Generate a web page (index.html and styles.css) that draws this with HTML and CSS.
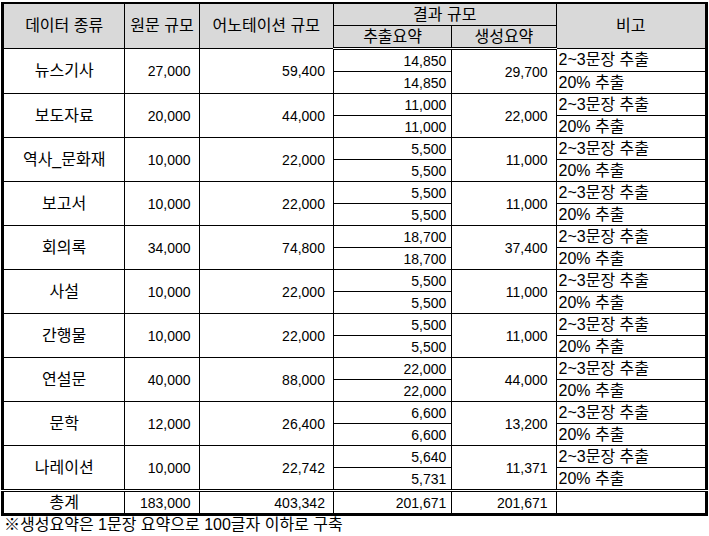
FILE: index.html
```html
<!DOCTYPE html>
<html lang="ko">
<head>
<meta charset="utf-8">
<link rel="stylesheet" href="styles.css">
</head>
<body>
<table class="sheet">
  <colgroup>
    <col class="c1"><col class="c2"><col class="c3"><col class="c4"><col class="c5"><col class="c6">
  </colgroup>
  <thead>
    <tr class="h1">
      <th rowspan="2">데이터 종류</th>
      <th rowspan="2">원문 규모</th>
      <th rowspan="2">어노테이션 규모</th>
      <th colspan="2">결과 규모</th>
      <th rowspan="2">비고</th>
    </tr>
    <tr class="h2">
      <th>추출요약</th>
      <th>생성요약</th>
    </tr>
  </thead>
  <tbody>
    <tr><td rowspan="2" class="name">뉴스기사</td><td rowspan="2" class="num">27,000</td><td rowspan="2" class="num">59,400</td><td class="sub">14,850</td><td rowspan="2" class="num">29,700</td><td class="note">2~3문장 추출</td></tr>
    <tr><td class="sub">14,850</td><td class="note">20% 추출</td></tr>
    <tr><td rowspan="2" class="name">보도자료</td><td rowspan="2" class="num">20,000</td><td rowspan="2" class="num">44,000</td><td class="sub">11,000</td><td rowspan="2" class="num">22,000</td><td class="note">2~3문장 추출</td></tr>
    <tr><td class="sub">11,000</td><td class="note">20% 추출</td></tr>
    <tr><td rowspan="2" class="name">역사_문화재</td><td rowspan="2" class="num">10,000</td><td rowspan="2" class="num">22,000</td><td class="sub">5,500</td><td rowspan="2" class="num">11,000</td><td class="note">2~3문장 추출</td></tr>
    <tr><td class="sub">5,500</td><td class="note">20% 추출</td></tr>
    <tr><td rowspan="2" class="name">보고서</td><td rowspan="2" class="num">10,000</td><td rowspan="2" class="num">22,000</td><td class="sub">5,500</td><td rowspan="2" class="num">11,000</td><td class="note">2~3문장 추출</td></tr>
    <tr><td class="sub">5,500</td><td class="note">20% 추출</td></tr>
    <tr><td rowspan="2" class="name">회의록</td><td rowspan="2" class="num">34,000</td><td rowspan="2" class="num">74,800</td><td class="sub">18,700</td><td rowspan="2" class="num">37,400</td><td class="note">2~3문장 추출</td></tr>
    <tr><td class="sub">18,700</td><td class="note">20% 추출</td></tr>
    <tr><td rowspan="2" class="name">사설</td><td rowspan="2" class="num">10,000</td><td rowspan="2" class="num">22,000</td><td class="sub">5,500</td><td rowspan="2" class="num">11,000</td><td class="note">2~3문장 추출</td></tr>
    <tr><td class="sub">5,500</td><td class="note">20% 추출</td></tr>
    <tr><td rowspan="2" class="name">간행물</td><td rowspan="2" class="num">10,000</td><td rowspan="2" class="num">22,000</td><td class="sub">5,500</td><td rowspan="2" class="num">11,000</td><td class="note">2~3문장 추출</td></tr>
    <tr><td class="sub">5,500</td><td class="note">20% 추출</td></tr>
    <tr><td rowspan="2" class="name">연설문</td><td rowspan="2" class="num">40,000</td><td rowspan="2" class="num">88,000</td><td class="sub">22,000</td><td rowspan="2" class="num">44,000</td><td class="note">2~3문장 추출</td></tr>
    <tr><td class="sub">22,000</td><td class="note">20% 추출</td></tr>
    <tr><td rowspan="2" class="name">문학</td><td rowspan="2" class="num">12,000</td><td rowspan="2" class="num">26,400</td><td class="sub">6,600</td><td rowspan="2" class="num">13,200</td><td class="note">2~3문장 추출</td></tr>
    <tr><td class="sub">6,600</td><td class="note">20% 추출</td></tr>
    <tr><td rowspan="2" class="name">나레이션</td><td rowspan="2" class="num">10,000</td><td rowspan="2" class="num">22,742</td><td class="sub">5,640</td><td rowspan="2" class="num">11,371</td><td class="note">2~3문장 추출</td></tr>
    <tr><td class="sub">5,731</td><td class="note">20% 추출</td></tr>
  </tbody>
  <tfoot>
    <tr class="total"><td class="name">총계</td><td class="num">183,000</td><td class="num">403,342</td><td class="sub">201,671</td><td class="num">201,671</td><td class="note"></td></tr>
  </tfoot>
</table>
<p class="footnote">※생성요약은 1문장 요약으로 100글자 이하로 구축</p>
</body>
</html>
```
FILE: styles.css
```css
html, body {
  margin: 0;
  padding: 0;
  background: #fff;
}
body {
  padding: 2px 0 0 1px;
  font-family: "Liberation Sans", "Noto Sans CJK KR", sans-serif;
  font-size: 16px;
  color: #000;
}
.sheet {
  border-collapse: collapse;
  table-layout: fixed;
  width: 707px;
  border-top: 2px solid #000;
  border-left: 3px solid #000;
  border-right: 3px solid #000;
  border-bottom: 3px solid #000;
}
.c1 { width: 122px; }
.c2 { width: 74px; }
.c3 { width: 134px; }
.c4 { width: 118px; }
.c5 { width: 104px; }
.c6 { width: 150px; }
.sheet th, .sheet td {
  border: 1px solid #000;
  padding: 0;
  height: 21px;
  line-height: 20px;
  white-space: nowrap;
  overflow: hidden;
}
.sheet th {
  background: #d9d9d9;
  font-weight: normal;
  text-align: center;
}
.h2 th {
  border-bottom: 3px double #000;
}
.name { text-align: center; }
.num { text-align: right; font-size: 14px; padding-right: 8px !important; }
.sub { text-align: right; font-size: 14px; padding-right: 5px !important; }
.note { text-align: left; padding-left: 2px !important; }
.total td {
  border-top: 3px double #000;
}
.footnote {
  margin: -2px 0 0;
  padding-left: 3px;
  line-height: 22px;
}
```
